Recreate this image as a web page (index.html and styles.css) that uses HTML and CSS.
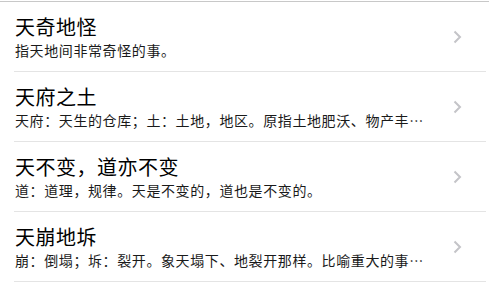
FILE: index.html
```html
<!DOCTYPE html>
<html lang="zh-CN">
<head>
    <meta charset="UTF-8">
    <meta name="viewport" content="width=device-width, initial-scale=1.0">
    <title>成语列表</title>
    <link rel="stylesheet" href="styles.css">
</head>
<body>
    <ul class="idiom-list">
        <li class="idiom-item">
            <div class="idiom-text">
                <div class="idiom-title">天奇地怪</div>
                <div class="idiom-desc">指天地间非常奇怪的事。</div>
            </div>
            <svg class="chevron" width="9" height="14" viewBox="0 0 9 14"><polyline points="1.5,1.5 7,7 1.5,12.5" /></svg>
        </li>
        <li class="idiom-item">
            <div class="idiom-text">
                <div class="idiom-title">天府之土</div>
                <div class="idiom-desc">天府：天生的仓库；土：土地，地区。原指土地肥沃、物产丰富的地区。后也指物产丰饶之地。</div>
            </div>
            <svg class="chevron" width="9" height="14" viewBox="0 0 9 14"><polyline points="1.5,1.5 7,7 1.5,12.5" /></svg>
        </li>
        <li class="idiom-item">
            <div class="idiom-text">
                <div class="idiom-title">天不变，道亦不变</div>
                <div class="idiom-desc">道：道理，规律。天是不变的，道也是不变的。</div>
            </div>
            <svg class="chevron" width="9" height="14" viewBox="0 0 9 14"><polyline points="1.5,1.5 7,7 1.5,12.5" /></svg>
        </li>
        <li class="idiom-item">
            <div class="idiom-text">
                <div class="idiom-title">天崩地坼</div>
                <div class="idiom-desc">崩：倒塌；坼：裂开。象天塌下、地裂开那样。比喻重大的事变。也比喻巨大的声响。</div>
            </div>
            <svg class="chevron" width="9" height="14" viewBox="0 0 9 14"><polyline points="1.5,1.5 7,7 1.5,12.5" /></svg>
        </li>
    </ul>
</body>
</html>
```

FILE: styles.css
```css
body {
    margin: 0;
    background: #fff;
    font-family: "Noto Sans CJK SC", "Noto Sans", sans-serif;
    color: #000;
}
.idiom-list {
    list-style: none;
    margin: 1px 0 0 0;
    padding: 0;
    border-top: 1px solid #c8c8c8;
}
.idiom-item {
    display: flex;
    align-items: center;
    height: 69px;
    margin: 0 3px 0 14px;
    padding-left: 1px;
    border-bottom: 1px solid #e4e4e4;
}
.idiom-text {
    flex: 1;
    min-width: 0;
}
.idiom-title {
    font-size: 20px;
    line-height: 26px;
    letter-spacing: 0.5px;
}
.idiom-desc {
    font-size: 14px;
    line-height: 20px;
    letter-spacing: 0.6px;
    color: #1a1a1a;
    white-space: nowrap;
    overflow: hidden;
    text-overflow: ellipsis;
}
.chevron {
    flex: none;
    margin: 0 24px 0 20px;
}
.chevron polyline {
    fill: none;
    stroke: #c4c4c8;
    stroke-width: 2;
}
```
